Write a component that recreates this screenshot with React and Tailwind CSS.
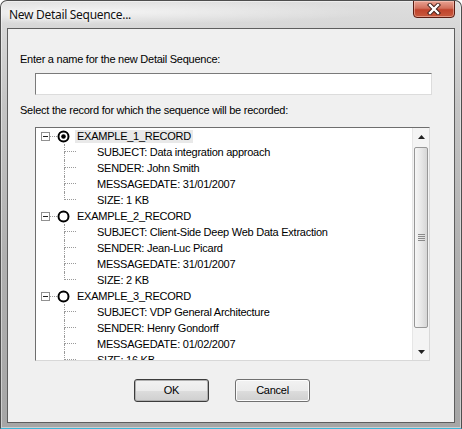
import React from 'react';

const RECORDS = [
  {
    name: 'EXAMPLE_1_RECORD',
    selected: true,
    fields: ['SUBJECT: Data integration approach', 'SENDER: John Smith', 'MESSAGEDATE: 31/01/2007', 'SIZE: 1 KB'],
  },
  {
    name: 'EXAMPLE_2_RECORD',
    fields: ['SUBJECT: Client-Side Deep Web Data Extraction', 'SENDER: Jean-Luc Picard', 'MESSAGEDATE: 31/01/2007', 'SIZE: 2 KB'],
  },
  {
    name: 'EXAMPLE_3_RECORD',
    fields: ['SUBJECT: VDP General Architecture', 'SENDER: Henry Gondorff', 'MESSAGEDATE: 01/02/2007', 'SIZE: 16 KB'],
  },
];

function Radio({ checked }) {
  return (
    <svg width="13" height="13" viewBox="0 0 13 13" className="shrink-0">
      <circle cx="6.5" cy="6.5" r="5" fill="#fff" stroke="#000" strokeWidth="2" />
      {checked && <circle cx="6.5" cy="6.5" r="2.3" fill="#000" />}
    </svg>
  );
}

function RootRow({ rec }) {
  return (
    <div className="h-[16px] flex items-center pl-[5px]">
      {/* expander box */}
      <div className="w-[9px] h-[9px] border border-[#919191] bg-white flex items-center justify-center shrink-0">
        <div className="w-[5px] h-px bg-[#222]" />
      </div>
      <div className="w-[7px] border-t border-dotted border-[#9a9a9a] shrink-0" />
      <Radio checked={rec.selected} />
      <span
        className={`ml-[5px] px-[2px] h-[13px] leading-[13px] whitespace-nowrap ${rec.selected ? 'bg-[#e9e9e9]' : ''}`}
      >
        {rec.name}
      </span>
    </div>
  );
}

function ChildRow({ text, last }) {
  return (
    <div className="h-[16px] flex pl-[28px]">
      <div className="w-[12px] flex flex-col shrink-0">
        <div className="h-[8px] border-l border-b border-dotted border-[#9a9a9a]" />
        <div className={`h-[8px] ${last ? '' : 'border-l border-dotted border-[#9a9a9a]'}`} />
      </div>
      <span className="pl-[21px] leading-[16px] whitespace-nowrap">{text}</span>
    </div>
  );
}

function ScrollArrow({ up }) {
  return (
    <div className="h-[17px] flex items-center justify-center">
      <svg width="7" height="4" viewBox="0 0 7 4">
        {up ? <path d="M3.5 0 L7 4 L0 4 Z" fill="#222" /> : <path d="M0 0 L7 0 L3.5 4 Z" fill="#222" />}
      </svg>
    </div>
  );
}

function Button({ children, primary }) {
  return (
    <div
      className={`w-[75px] h-[23px] rounded-[3px] flex items-center justify-center bg-[linear-gradient(180deg,#f2f2f2_0%,#ebebeb_50%,#dddddd_51%,#cfcfcf_100%)] ${
        primary ? 'border border-[#3c3c3c] shadow-[inset_0_0_0_1px_#b0b0b0]' : 'border border-[#707070] shadow-[inset_0_0_0_1px_#fcfcfc]'
      }`}
    >
      {children}
    </div>
  );
}

export default function App() {
  return (
    <div className="w-[462px] h-[429px] flex flex-col rounded-t-[7px] border border-[#4e4e4e] border-b-[#3cb6d8] bg-[linear-gradient(180deg,#dedede_0%,#c4c4c4_25%,#b0b0b0_60%,#a6a6a6_100%)] shadow-[inset_0_0_0_1px_rgba(255,255,255,0.45)] font-['Liberation_Sans',Arial,sans-serif] text-[11px] tracking-[-0.25px] text-black overflow-hidden">
      {/* title bar */}
      <div className="h-[27px] flex justify-between shrink-0 bg-[radial-gradient(ellipse_at_20%_40%,rgba(255,255,255,0.7),rgba(255,255,255,0)_55%)]">
        <span className="pl-[8px] pt-[6px] font-['Noto_Sans',sans-serif] text-[12px] tracking-[-0.3px] leading-[16px] text-[#111] [text-shadow:0_0_6px_#fff,0_0_3px_#fff]">
          New Detail Sequence...
        </span>
        <div className="-mt-px mr-[6px] w-[42px] h-[18px] rounded-b-[4px] border border-[#5a1c12] bg-[linear-gradient(180deg,#e9a393_0%,#d2705c_45%,#c0432c_55%,#c85a3e_100%)] shadow-[inset_0_0_0_1px_rgba(255,220,210,0.45)] flex items-center justify-center">
          <svg width="14" height="12" viewBox="0 0 14 12">
            <path d="M3 2 L11 10 M11 2 L3 10" stroke="#3a1a14" strokeWidth="4.2" strokeLinecap="square" />
            <path d="M3 2 L11 10 M11 2 L3 10" stroke="#fff" strokeWidth="2.4" strokeLinecap="square" />
          </svg>
        </div>
      </div>

      {/* client area */}
      <div className="mx-[6px] h-[395px] border border-[#5e5e5e] bg-[#f0f0f0] flex flex-col pl-[12px] pt-[22px] shrink-0">
        <div className="leading-[16px]">Enter a name for the new Detail Sequence:</div>
        <div className="mt-[6px] ml-[15px] w-[397px] h-[22px] bg-white border border-[#7a7a7a] border-r-[#dcdcdc] border-b-[#dcdcdc]" />
        <div className="mt-[7px] leading-[16px]">Select the record for which the sequence will be recorded:</div>

        {/* tree */}
        <div className="mt-[9px] ml-[15px] w-[395px] h-[234px] bg-white border border-[#6e6e6e] border-r-[#d8d8d8] border-b-[#d8d8d8] flex">
          <div className="flex-1 overflow-hidden">
            {RECORDS.map((rec) => (
              <div key={rec.name}>
                <RootRow rec={rec} />
                {rec.fields.map((f, i) => (
                  <ChildRow key={f} text={f} last={i === rec.fields.length - 1} />
                ))}
              </div>
            ))}
          </div>
          <div className="w-[17px] flex flex-col bg-[#f4f4f4] border-l border-[#e6e6e6]">
            <ScrollArrow up />
            <div className="flex-1 pt-[2px] px-[1px]">
              <div className="h-[181px] rounded-[2px] border border-[#979797] bg-[linear-gradient(90deg,#f6f6f6_0%,#e8e8e8_50%,#d6d6d6_100%)] flex flex-col items-center justify-center gap-[1px]">
                <div className="w-[7px] h-px bg-[#8a8a8a]" />
                <div className="w-[7px] h-px bg-[#8a8a8a]" />
                <div className="w-[7px] h-px bg-[#8a8a8a]" />
                <div className="w-[7px] h-px bg-[#8a8a8a]" />
              </div>
            </div>
            <ScrollArrow />
          </div>
        </div>

        {/* buttons */}
        <div className="mt-[18px] ml-[114px] flex gap-[26px]">
          <Button primary>OK</Button>
          <Button>Cancel</Button>
        </div>
      </div>
    </div>
  );
}
